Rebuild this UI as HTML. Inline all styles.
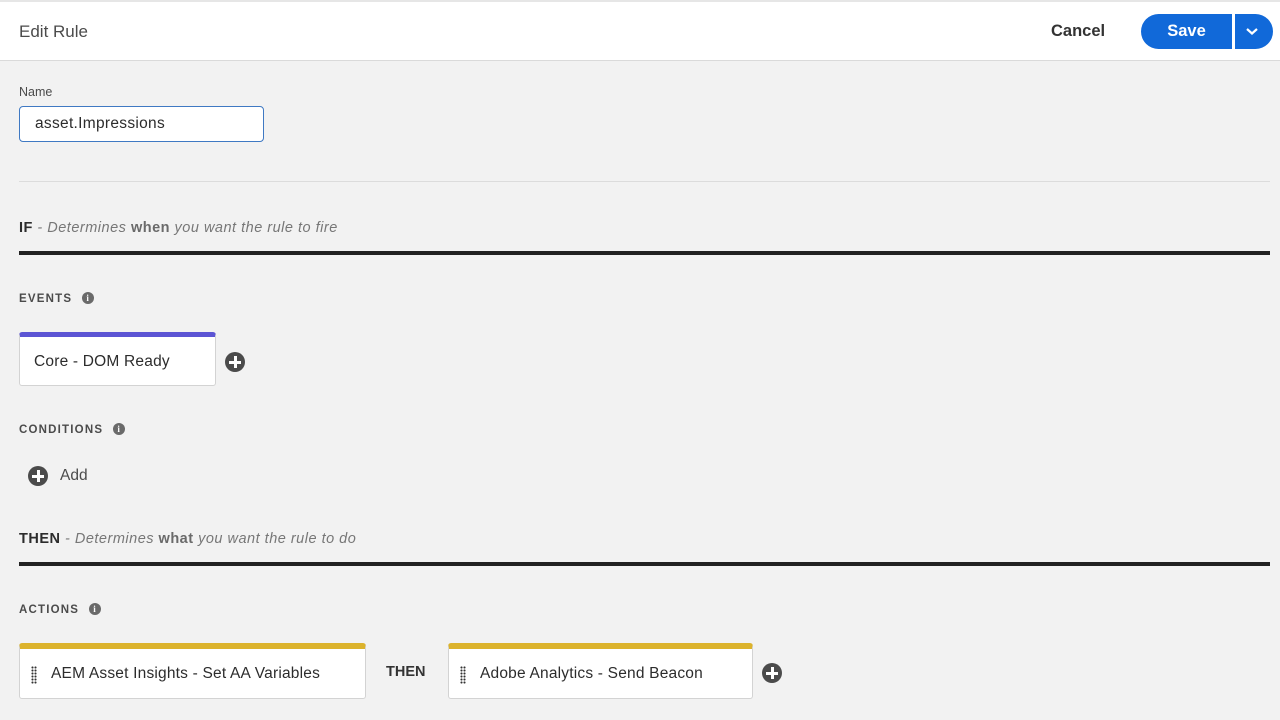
<!DOCTYPE html>
<html><head><style>
*{box-sizing:border-box;margin:0;padding:0}
body{width:1280px;height:720px;background:#f2f2f2;font-family:"Liberation Sans",sans-serif;position:relative;overflow:hidden;color:#2c2c2c}
.a{position:absolute}
.hdr{left:0;top:0;width:1280px;height:61px;background:#fff;border-top:2px solid #e6e6e6;border-bottom:1px solid #dadada}
.lbl{font-size:11.5px;letter-spacing:1.2px;color:#4b4b4b;font-weight:bold}
.info{display:inline-block;width:12px;height:12px;border-radius:50%;background:#6a6a6a;color:#fff;font-size:9px;text-align:center;line-height:12px;font-weight:bold;font-family:"Liberation Serif",serif;vertical-align:1px;margin-left:10px}
.card{background:#fff;border:1px solid #d3d3d3;border-radius:3px;font-size:15.5px;letter-spacing:0.2px;color:#2c2c2c}
.plus{width:20px;height:20px;border-radius:50%;background:#4b4b4b}
.plus:before{content:"";position:absolute;left:4px;top:8.5px;width:12px;height:3px;background:#fff}
.plus:after{content:"";position:absolute;left:8.5px;top:4px;width:3px;height:12px;background:#fff}
.rule{left:19px;width:1251px;height:4px;border-top:2px solid #222;border-bottom:2px solid #222}
.sec{font-size:14.5px;color:#777;font-style:italic;letter-spacing:0.5px}
.sec b{font-style:normal;color:#2c2c2c}
.sec .w{font-style:normal;font-weight:bold;color:#6a6a6a}
.grip{left:11px;top:17px;width:6px;height:18px;background-image:radial-gradient(circle,#333 0.9px,transparent 1.2px);background-size:3px 3px}
</style></head><body>
<div class="a hdr"></div>
<div class="a" style="left:19px;top:22px;font-size:17px;color:#4b4b4b">Edit Rule</div>
<div class="a" style="left:1051px;top:22px;font-size:16.5px;color:#333;font-weight:bold">Cancel</div>
<div class="a" style="left:1141px;top:14px;width:91px;height:35px;background:#1169d9;border-radius:18px 0 0 18px;color:#fff;font-weight:bold;font-size:16.5px;text-align:center;line-height:35px">Save</div>
<div class="a" style="left:1235px;top:14px;width:38px;height:35px;background:#1169d9;border-radius:0 18px 18px 0"><svg width="38" height="35"><path d="M12 15l5 4.5 5-4.5" stroke="#fff" stroke-width="2.2" fill="none"/></svg></div>
<div class="a" style="left:19px;top:85px;font-size:12.5px;color:#4b4b4b">Name</div>
<div class="a" style="left:19px;top:106px;width:245px;height:36px;background:#fff;border:1.5px solid #3f79c3;border-radius:4px;font-size:15.5px;letter-spacing:0.3px;padding:8px 0 0 15px;color:#2c2c2c">asset.Impressions</div>
<div class="a" style="left:19px;top:181px;width:1251px;height:1px;background:#dcdcdc"></div>
<div class="a sec" style="left:19px;top:220px"><b>IF</b> - Determines <span class="w">when</span> you want the rule to fire</div>
<div class="a rule" style="top:251px"></div>
<div class="a lbl" style="left:19px;top:292px">EVENTS<span class="info">i</span></div>
<div class="a card" style="left:19px;top:332px;width:197px;height:54px;border-top:5px solid #5c55d4;padding:16px 0 0 14px">Core - DOM Ready</div>
<div class="a plus" style="left:225px;top:352px"></div>
<div class="a lbl" style="left:19px;top:423px">CONDITIONS<span class="info">i</span></div>
<div class="a plus" style="left:28px;top:466px"></div>
<div class="a" style="left:60px;top:467px;font-size:15.5px;color:#4b4b4b">Add</div>
<div class="a sec" style="left:19px;top:531px"><b>THEN</b> - Determines <span class="w">what</span> you want the rule to do</div>
<div class="a rule" style="top:562px"></div>
<div class="a lbl" style="left:19px;top:603px">ACTIONS<span class="info">i</span></div>
<div class="a card" style="left:19px;top:643px;width:347px;height:56px;border-top:6px solid #dcb32c;padding:16px 0 0 31px">AEM Asset Insights - Set AA Variables<div class="a grip"></div></div>
<div class="a" style="left:386px;top:664px;font-size:14.5px;font-weight:bold;color:#333">THEN</div>
<div class="a card" style="left:448px;top:643px;width:305px;height:56px;border-top:6px solid #dcb32c;padding:16px 0 0 31px">Adobe Analytics - Send Beacon<div class="a grip"></div></div>
<div class="a plus" style="left:762px;top:663px"></div>
</body></html>
